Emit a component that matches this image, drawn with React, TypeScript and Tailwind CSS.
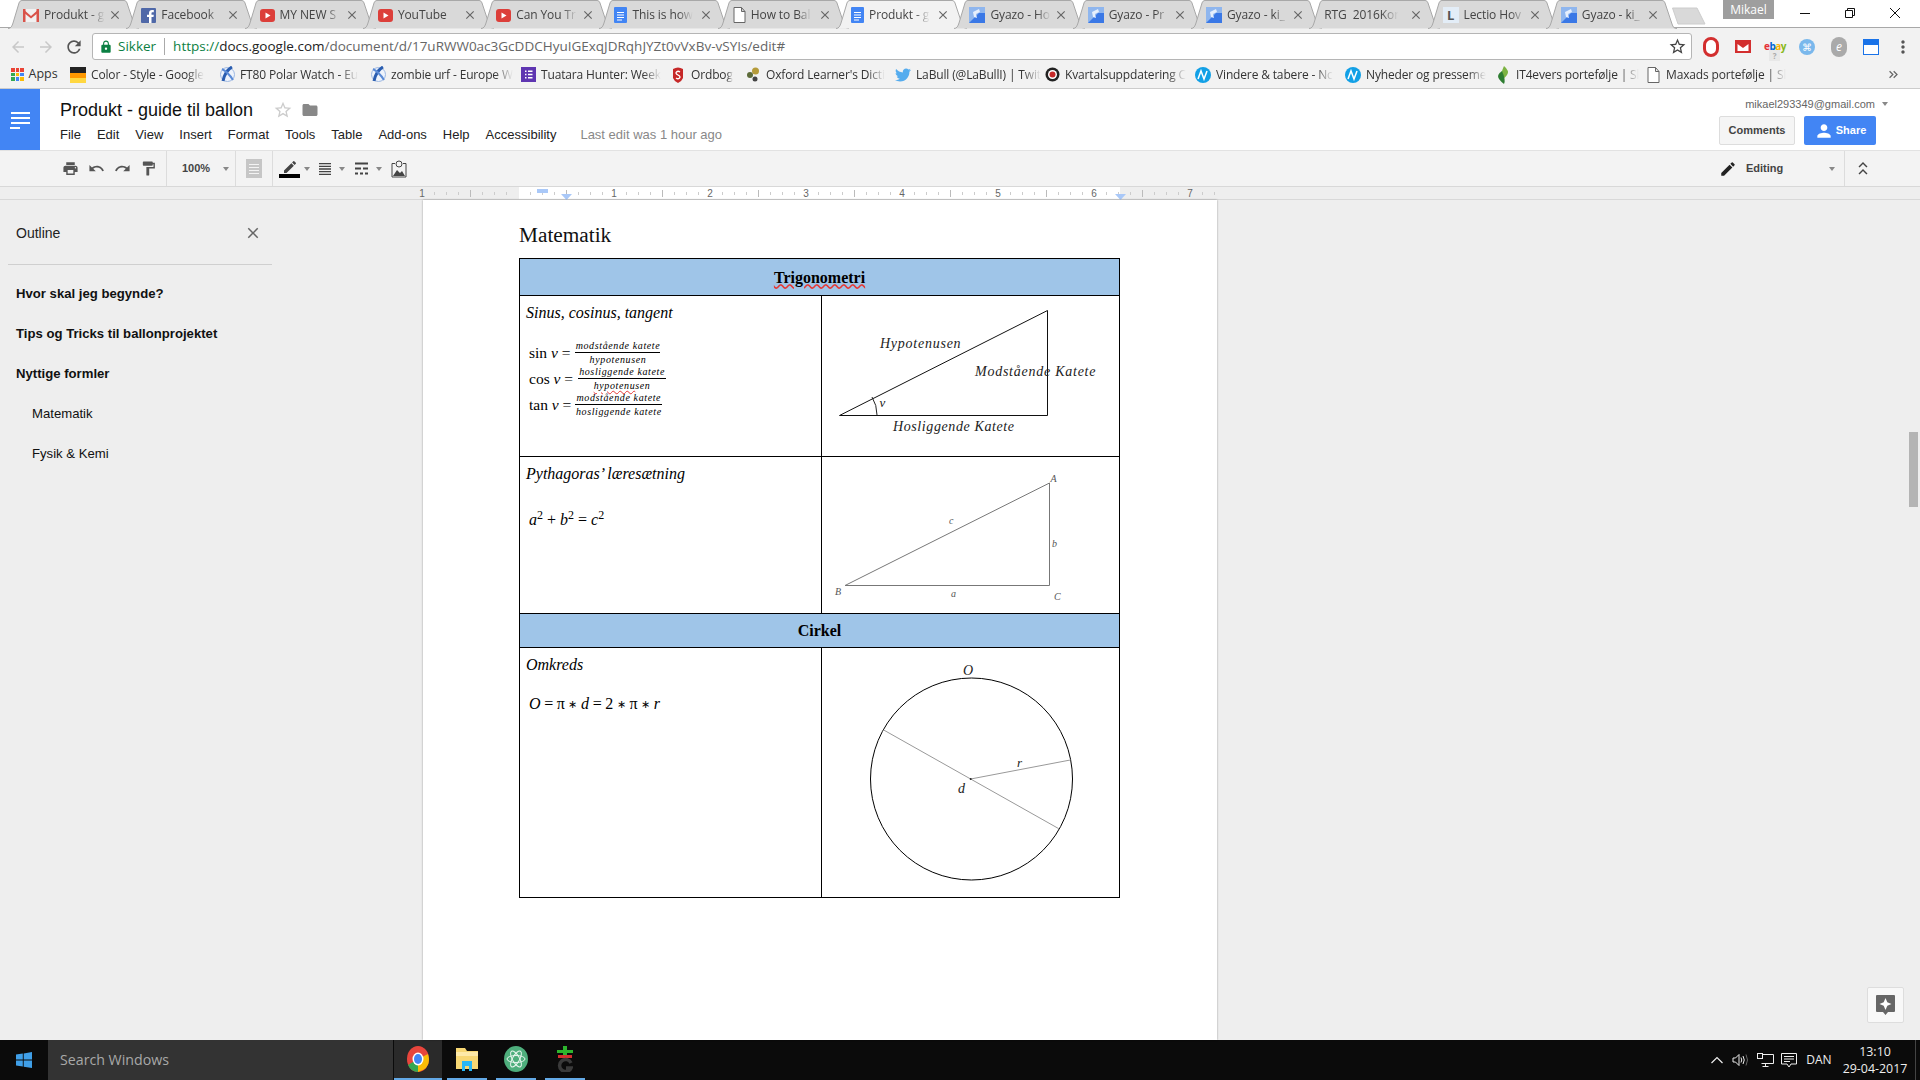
import { ReactNode } from 'react';
import {
  MdArrowBack,
  MdArrowForward,
  MdRefresh,
  MdLock,
  MdStarBorder,
  MdPrint,
  MdUndo,
  MdRedo,
  MdFormatPaint,
  MdEdit,
  MdFolder,
  MdClose,
  MdPerson,
  MdFormatAlignJustify,
  MdMoreVert,
  MdKeyboardArrowUp,
  MdKeyboardDoubleArrowRight,
} from 'react-icons/md';
import { FaTwitter } from 'react-icons/fa';

const GmailIcon = () => (
  <svg width="16" height="13" viewBox="0 0 16 13" className="shrink-0">
    <rect width="16" height="13" fill="#f1f1f1" />
    <path d="M0 0h2.5v13H0zM13.500 0H16v13h-2.500z" fill="#d9534a" />
    <path d="M0 0l8 7 8-7v3L8 9.500 0 3z" fill="#d9534a" />
  </svg>
);

const FacebookIcon = () => (
  <svg width="15" height="15" viewBox="0 0 15 15" className="shrink-0">
    <rect width="15" height="15" rx="1" fill="#4f68a8" />
    <path d="M10.500 15V9h2l.3-2.300h-2.300V5.300c0-.7.2-1.100 1.100-1.100h1.200V2.100c-.3 0-1-.1-1.800-.1-1.800 0-3 1-3 3v1.700h-2V9h2v6z" fill="#fff" />
  </svg>
);

const YoutubeIcon = () => (
  <svg width="15" height="13" viewBox="0 0 15 13" className="shrink-0">
    <rect width="15" height="13" rx="3" fill="#dc3f3a" />
    <path d="M5.500 3.500l5 3-5 3z" fill="#fff" />
  </svg>
);

const DocsIcon = () => (
  <svg width="13" height="16" viewBox="0 0 13 16" className="shrink-0">
    <rect width="13" height="16" rx="1" fill="#4285f4" />
    <path d="M3 5h7v1H3zM3 7.500h7v1H3zM3 10h7v1H3zM3 12.500h5v1H3z" fill="#fff" />
  </svg>
);

const BlankIcon = () => (
  <svg width="13" height="16" viewBox="0 0 13 16" className="shrink-0">
    <path d="M1 .5h7.500L12 4.500v11H1zM8.500 .5v4H12" fill="#fff" stroke="#666" />
  </svg>
);

const GyazoIcon = () => (
  <svg width="16" height="16" viewBox="0 0 16 16" className="shrink-0">
    <rect width="16" height="16" fill="#8fb6ee" />
    <path d="M0 16L10 6l6 0v10z" fill="#3a78e6" />
    <path d="M4 5l6-3 1 3-4 2 1 4-3-1z" fill="#e6effc" />
  </svg>
);

const LectioIcon = () => (
  <div className="w-[16px] h-[16px] shrink-0 bg-[#e3edf7] flex items-center justify-center text-[13px] font-bold text-[#555] leading-none">L</div>
);

const tabs: { title: string; icon?: ReactNode; active?: boolean }[] = [
  { title: 'Produkt - g', icon: <GmailIcon /> },
  { title: 'Facebook', icon: <FacebookIcon /> },
  { title: 'MY NEW S', icon: <YoutubeIcon /> },
  { title: 'YouTube', icon: <YoutubeIcon /> },
  { title: 'Can You Tr', icon: <YoutubeIcon /> },
  { title: 'This is how', icon: <DocsIcon /> },
  { title: 'How to Bal', icon: <BlankIcon /> },
  { title: 'Produkt - g', icon: <DocsIcon />, active: true },
  { title: 'Gyazo - Ho', icon: <GyazoIcon /> },
  { title: 'Gyazo - Pr', icon: <GyazoIcon /> },
  { title: 'Gyazo - ki_', icon: <GyazoIcon /> },
  { title: 'RTG  2016Komit' },
  { title: 'Lectio Hov', icon: <LectioIcon /> },
  { title: 'Gyazo - ki_', icon: <GyazoIcon /> },
];

const Tab = ({ title, icon, active }: { title: string; icon?: ReactNode; active?: boolean }) => (
  <div className="relative w-[118.3px] h-[28px] shrink-0 flex items-center pl-[15px] pt-[2px]">
    <svg width="132" height="29" viewBox="0 0 132 29" className="absolute left-0 top-0">
      <path
        d="M0 28.500C3 28.500 4 26 5 23L11 3C11.500 1.500 12.500 .5 14 .5H116C117.500 .5 118.500 1.500 119 3L126 24C127 27 128 28.500 131 28.500"
        fill={active ? '#f2f2f2' : '#d9d9d9'}
        stroke="#a8a8a8"
      />
    </svg>
    <div className="relative flex items-center gap-[5px]">
      {icon}
      <span className={`whitespace-pre text-[12px] text-[#444] tracking-[-0.1px] ${icon ? 'w-[62px]' : 'w-[76px]'} [mask-image:linear-gradient(to_right,black_75%,transparent_98%)]`}>
        {title}
      </span>
    </div>
    <MdClose className="absolute left-[100px] top-[8px] text-[#666]" size={14} />
  </div>
);

const bookmarks: { title: string; icon: ReactNode; w: string }[] = [
  {
    title: 'Color - Style - Google',
    w: 'w-[149px]',
    icon: (
      <div className="w-[16px] h-[16px] flex flex-col">
        <div className="h-[6px] bg-[#222]" />
        <div className="h-[5px] bg-[#ff9800]" />
        <div className="h-[5px] bg-[#ffd740]" />
      </div>
    ),
  },
  { title: 'FT80 Polar Watch - Eu', w: 'w-[151px]', icon: <PolarIcon /> },
  { title: 'zombie urf - Europe W', w: 'w-[150px]', icon: <PolarIcon /> },
  {
    title: 'Tuatara Hunter: Week',
    w: 'w-[150px]',
    icon: (
      <svg width="15" height="15" viewBox="0 0 15 15">
        <rect width="15" height="15" fill="#5e35b1" />
        <path d="M4 3.500h1.500V5H4zM7 3.500h4.500V5H7zM4 6.800h1.500v1.500H4zM7 6.800h4.500v1.500H7zM4 10h1.500v1.500H4zM7 10h4.500v1.500H7z" fill="#fff" />
      </svg>
    ),
  },
  {
    title: 'Ordbog',
    w: 'w-[75px]',
    icon: (
      <svg width="12" height="16" viewBox="0 0 12 16">
        <path d="M1 2q5-3 10 0v9q-1 3-5 5q-4-2-5-5z" fill="#c62828" />
        <path d="M8 5Q6 3.500 4.500 5T6 8t1.500 3T4 11" fill="none" stroke="#fff" strokeWidth="1.300" />
      </svg>
    ),
  },
  {
    title: "Oxford Learner's Dicti",
    w: 'w-[150px]',
    icon: (
      <svg width="15" height="15" viewBox="0 0 15 15">
        <circle cx="9.500" cy="4" r="3.500" fill="#b59b3a" />
        <circle cx="4" cy="8" r="3" fill="#5d6b3a" />
        <circle cx="9" cy="12" r="2.500" fill="#444" />
      </svg>
    ),
  },
  { title: 'LaBull (@LaBullI) | Twit', w: 'w-[149px]', icon: <FaTwitter className="text-[#55acee]" size={16} /> },
  {
    title: 'Kvartalsuppdatering C',
    w: 'w-[151px]',
    icon: (
      <svg width="15" height="15" viewBox="0 0 15 15">
        <circle cx="7.500" cy="7.500" r="7" fill="#222" />
        <circle cx="7.500" cy="7.500" r="4.500" fill="#fff" />
        <circle cx="7.500" cy="7.500" r="3" fill="#c62828" />
      </svg>
    ),
  },
  { title: 'Vindere & tabere - Nc', w: 'w-[150px]', icon: <NordnetIcon /> },
  { title: 'Nyheder og presseme', w: 'w-[150px]', icon: <NordnetIcon /> },
  {
    title: 'IT4evers portefølje | Sl',
    w: 'w-[150px]',
    icon: (
      <svg width="14" height="18" viewBox="0 0 14 18">
        <path d="M8 0Q14 5 11 9T6 13Q4 8 8 0z" fill="#7cb342" />
        <path d="M6 5Q0 9 3 13t5 5q2-4-2-13z" fill="#2e7d32" />
      </svg>
    ),
  },
  { title: 'Maxads portefølje | Sl', w: 'w-[150px]', icon: <BlankIcon /> },
];

function PolarIcon() {
  return (
    <svg width="15" height="17" viewBox="0 0 15 17">
      <circle cx="7.500" cy="8.500" r="7" fill="#eef3fb" stroke="#9db8e2" />
      <path d="M12 1Q5 5 3 15" fill="none" stroke="#2a5db0" strokeWidth="3" />
      <path d="M2 3q6 3 11 11" fill="none" stroke="#5b8bd6" strokeWidth="2" />
    </svg>
  );
}

function NordnetIcon() {
  return (
    <svg width="16" height="16" viewBox="0 0 16 16">
      <circle cx="8" cy="8" r="8" fill="#12a0e6" />
      <path d="M3 12L6 4l3 8 3-8" fill="none" stroke="#fff" strokeWidth="1.500" />
    </svg>
  );
}

const Caret = ({ className = '' }: { className?: string }) => (
  <div className={`w-0 h-0 border-l-[3px] border-r-[3px] border-t-[4px] border-l-transparent border-r-transparent border-t-[#888] ${className}`} />
);

const menu = ['File', 'Edit', 'View', 'Insert', 'Format', 'Tools', 'Table', 'Add-ons', 'Help', 'Accessibility'];

const Ruler = () => {
  const ticks: number[] = [];
  for (let x = 434; x < 1220; x += 12) ticks.push(x);
  const numbers = [
    { x: 422, n: 1 },
    { x: 614, n: 1 },
    { x: 710, n: 2 },
    { x: 806, n: 3 },
    { x: 902, n: 4 },
    { x: 998, n: 5 },
    { x: 1094, n: 6 },
    { x: 1190, n: 7 },
  ];
  return (
    <svg width="1920" height="14" viewBox="0 186 1920 14" className="block">
      <rect x="0" y="186" width="1920" height="14" fill="#eeeeee" />
      <rect x="519" y="187" width="601" height="12" fill="#ffffff" />
      <path d="M0 186.500H1920M0 199.500H1920" stroke="#d8d8d8" />
      {ticks.map((x) => {
        if ((x - 422) % 96 === 0) return null;
        const big = (x - 422) % 48 === 0;
        return <path key={x} d={`M${x + 0.5} ${big ? 190 : 192}V${big ? 197 : 195}`} stroke={big ? '#bbb' : '#ccc'} />;
      })}
      {numbers.map((item) => (
        <text key={item.x} x={item.x} y="197" textAnchor="middle" fontSize="10" fill="#666" fontFamily="Liberation Sans">
          {item.n}
        </text>
      ))}
      <rect x="537" y="189" width="11" height="4" fill="#a9c8f8" />
      <path d="M561 194h11l-5.500 6z" fill="#a9c8f8" />
      <path d="M1115 194h11l-5.500 6z" fill="#a9c8f8" />
    </svg>
  );
};

const Frac = ({ top, bottom, width, flagged }: { top: string; bottom: string; width: string; flagged?: boolean }) => (
  <div className={`flex flex-col items-center italic text-[10px] tracking-[0.62px] ${width}`}>
    <div className="w-full text-center leading-[12px] border-b border-black whitespace-nowrap">{top}</div>
    {flagged ? (
      <div className="leading-[13px] whitespace-nowrap">
        <span className="underline decoration-wavy decoration-[#e53935]">hypotenu</span>sen
      </div>
    ) : (
      <div className="leading-[13px] whitespace-nowrap">{bottom}</div>
    )}
  </div>
);

const FormulaRow = ({ fn, children, gap }: { fn: string; children: ReactNode; gap: string }) => (
  <div className={`h-[26px] flex items-center ${gap}`}>
    <span className="text-[15.5px] whitespace-pre">
      {fn} <i>v</i> =
    </span>
    {children}
  </div>
);

const TriangleOne = () => (
  <svg width="298" height="160" viewBox="822 296 298 160" className="block" fontFamily="Liberation Serif" fontStyle="italic" fill="#222">
    <path d="M839.500 415.500H1047.500V310.500z" fill="none" stroke="#111" />
    <path d="M872 397Q877 405 877 415" fill="none" stroke="#222" />
    <text x="879.500" y="407" fontSize="13">v</text>
    <text x="880" y="348" fontSize="14" letterSpacing="0.75">Hypotenusen</text>
    <text x="975" y="376" fontSize="14" letterSpacing="0.75">Modstående Katete</text>
    <text x="893" y="431" fontSize="14" letterSpacing="0.6">Hosliggende Katete</text>
  </svg>
);

const TriangleTwo = () => (
  <svg width="298" height="156" viewBox="822 457 298 156" className="block" fontFamily="Liberation Serif" fontStyle="italic" fontSize="10" fill="#555">
    <path d="M845 585.500H1049.500V483z" fill="none" stroke="#777" />
    <text x="1050.500" y="482">A</text>
    <text x="835" y="595">B</text>
    <text x="1054" y="600">C</text>
    <text x="949" y="524">c</text>
    <text x="1052" y="547">b</text>
    <text x="951" y="597">a</text>
  </svg>
);

const CircleFigure = () => (
  <svg width="298" height="249" viewBox="822 647 298 249" className="block" fontFamily="Liberation Serif" fontStyle="italic" fill="#222">
    <circle cx="971.500" cy="778" r="101" fill="none" stroke="#000" />
    <path d="M883.700 729L1058.800 827.700M970.700 778L1070.300 759" fill="none" stroke="#999" />
    <circle cx="970.700" cy="778" r="1" fill="#222" />
    <text x="963" y="674" fontSize="14">O</text>
    <text x="1017" y="766" fontSize="13">r</text>
    <text x="958" y="792" fontSize="14">d</text>
  </svg>
);

const Outline = () => (
  <aside className="w-[423px] shrink-0 pl-[8px] pt-[22px]">
    <div className="w-[264px] h-[43px] border-b border-[#cfcfcf] pl-[8px] pr-[10px] flex justify-between">
      <span className="text-[14px] leading-[22px] text-[#222]">Outline</span>
      <MdClose className="text-[#666] mt-[2px]" size={18} />
    </div>
    <div className="flex flex-col pt-[9px] text-[13.15px] text-[#111]">
      <div className="h-[40px] flex items-center pl-[8px] font-bold">Hvor skal jeg begynde?</div>
      <div className="h-[40px] flex items-center pl-[8px] font-bold">Tips og Tricks til ballonprojektet</div>
      <div className="h-[40px] flex items-center pl-[8px] font-bold">Nyttige formler</div>
      <div className="h-[40px] flex items-center pl-[24px]">Matematik</div>
      <div className="h-[40px] flex items-center pl-[24px]">Fysik &amp; Kemi</div>
    </div>
  </aside>
);

const Star = () => <span className="text-[11px] align-[1px]">∗</span>;

const MathTable = () => (
  <table className="w-[600px] table-fixed border-collapse font-['Liberation_Serif',serif] text-[16px] text-black">
    <colgroup>
      <col className="w-[302px]" />
      <col className="w-[298px]" />
    </colgroup>
    <tbody>
      <tr className="h-[37px]">
        <td colSpan={2} className="border border-black bg-[#9fc5e8] text-center font-bold p-0 pt-[1px]">
          <span className="underline decoration-wavy decoration-[#e53935]">Trigonometri</span>
        </td>
      </tr>
      <tr className="h-[161px]">
        <td className="border border-black align-top pl-[6px] pt-[8px] pb-0 pr-0">
          <div className="italic leading-[18px]">Sinus, cosinus, tangent</div>
          <div className="flex flex-col mt-[18px] pl-[3px]">
            <FormulaRow fn="sin" gap="gap-[5px]">
              <Frac top="modstående katete" bottom="hypotenusen" width="w-[85px]" />
            </FormulaRow>
            <FormulaRow fn="cos" gap="gap-[5px]">
              <Frac top="hosliggende katete" bottom="hypotenusen" width="w-[88px]" flagged />
            </FormulaRow>
            <FormulaRow fn="tan" gap="gap-[4px]">
              <Frac top="modstående katete" bottom="hosliggende katete" width="w-[87px]" />
            </FormulaRow>
          </div>
        </td>
        <td className="border border-black p-0 align-top">
          <TriangleOne />
        </td>
      </tr>
      <tr className="h-[157px]">
        <td className="border border-black align-top pl-[6px] pt-[8px] pb-0 pr-0">
          <div className="italic leading-[18px]">Pythagoras’ læresætning</div>
          <div className="italic mt-[27px] pl-[3px] leading-[20px]">
            a<sup className="not-italic text-[12px]">2</sup> <span className="not-italic">+</span> b<sup className="not-italic text-[12px]">2</sup> <span className="not-italic">=</span> c<sup className="not-italic text-[12px]">2</sup>
          </div>
        </td>
        <td className="border border-black p-0 align-top">
          <TriangleTwo />
        </td>
      </tr>
      <tr className="h-[34px]">
        <td colSpan={2} className="border border-black bg-[#9fc5e8] text-center font-bold p-0">
          Cirkel
        </td>
      </tr>
      <tr className="h-[250px]">
        <td className="border border-black align-top pl-[6px] pt-[8px] pb-0 pr-0">
          <div className="italic leading-[18px]">Omkreds</div>
          <div className="mt-[20px] pl-[3px] leading-[20px] whitespace-pre tracking-[-0.2px]">
            <i>O</i> = π <Star /> <i>d</i> = 2 <Star /> π <Star /> <i>r</i>
          </div>
        </td>
        <td className="border border-black p-0 align-top">
          <CircleFigure />
        </td>
      </tr>
    </tbody>
  </table>
);

const TaskTile = ({ children, className = '' }: { children: ReactNode; className?: string }) => (
  <div className={`h-full border-b-[2px] border-[#63a9e6] flex items-center justify-center ${className}`}>{children}</div>
);

export default function App() {
  return (
    <div className="w-[1920px] h-[1080px] flex flex-col overflow-hidden bg-white font-['Liberation_Sans',Arial,sans-serif]">
      {/* browser chrome */}
      <div className="font-['Open_Sans',sans-serif] text-[#333]">
        <div className="relative h-[28px] flex pl-[8px] bg-white border-b border-[#a8a8a8]">
          {tabs.map((tab, i) => (
            <Tab key={i} title={tab.title} icon={tab.icon} active={tab.active} />
          ))}
          <svg width="34" height="18" viewBox="0 0 34 18" className="ml-[8px] mt-[7px]">
            <path d="M.5 1H25L33 17H6z" fill="#d9d9d9" stroke="#ccc" />
          </svg>
          <div className="absolute left-[1723px] top-0 w-[51px] h-[19px] bg-[#9e9e9e] flex items-center justify-center text-[12px] text-white">Mikael</div>
          <svg width="12" height="12" viewBox="0 0 12 12" className="absolute left-[1799px] top-[7px]">
            <path d="M1 6.500h10" stroke="#111" />
          </svg>
          <svg width="12" height="12" viewBox="0 0 12 12" className="absolute left-[1844px] top-[7px]">
            <path d="M1.500 3.500h7v7h-7zM3.500 3.500v-2h7v7h-2" fill="none" stroke="#111" />
          </svg>
          <svg width="12" height="12" viewBox="0 0 12 12" className="absolute left-[1889px] top-[7px]">
            <path d="M1 1l10 10M11 1L1 11" stroke="#111" />
          </svg>
        </div>

        <div className="h-[33px] pt-[4px] bg-[#f2f2f2] flex items-center">
          <MdArrowBack className="ml-[9px] text-[#c8c8c8]" size={18} />
          <MdArrowForward className="ml-[10px] text-[#c8c8c8]" size={18} />
          <MdRefresh className="ml-[9px] text-[#555]" size={20} />
          <div className="ml-[8px] w-[1600px] h-[27px] bg-white border border-[#b5b5b5] rounded-[3px] flex items-center pl-[6px] pr-[4px]">
            <MdLock className="text-[#0b8043]" size={14} />
            <span className="ml-[5px] text-[13.5px] text-[#0b8043]">Sikker</span>
            <div className="ml-[8px] w-px h-[17px] bg-[#aaa]" />
            <span className="ml-[8px] text-[13.5px] text-[#666] whitespace-nowrap">
              <span className="text-[#0b8043]">https://</span>
              <span className="text-[#222]">docs.google.com</span>/document/d/17uRWW0ac3GcDDCHyuIGExqJDRqhJYZt0vVxBv-vSYIs/edit#
            </span>
            <MdStarBorder className="ml-auto text-[#444]" size={19} />
          </div>
          <div className="ml-[3px] flex items-center">
            <div className="w-[32px] flex justify-center">
              <div className="w-[16px] h-[20px] rounded-full border-[3px] border-[#d32f2f] bg-white" />
            </div>
            <div className="w-[32px] flex justify-center">
              <svg width="16" height="13" viewBox="0 0 16 13">
                <path d="M0 0h16v13H0z" fill="#d32f2f" />
                <path d="M2.500 4l5.500 4 5.500-4v7h-11z" fill="#fff" />
              </svg>
            </div>
            <div className="relative w-[32px] h-[20px] flex justify-center items-center text-[10px] font-bold tracking-[-0.5px]">
              <span className="text-[#e53238]">e</span>
              <span className="text-[#0064d2]">b</span>
              <span className="text-[#f5af02]">a</span>
              <span className="text-[#86b817]">y</span>
              <div className="absolute left-[10px] top-[13px] w-[11px] h-[11px] bg-[#e8e8e8] text-[8px] text-[#aaa] text-center leading-[11px]">?</div>
            </div>
            <div className="w-[32px] flex justify-center">
              <div className="w-[16px] h-[16px] rounded-full bg-[#7ab8ec] text-white text-[10px] leading-[16px] text-center">⌘</div>
            </div>
            <div className="w-[32px] flex justify-center">
              <div className="w-[16px] h-[20px] rounded-full bg-[#aaa] text-white text-[12px] italic leading-[20px] text-center">e</div>
            </div>
            <div className="w-[32px] flex justify-center">
              <div className="w-[16px] h-[16px] bg-[#1a73e8] flex items-end justify-center">
                <div className="w-[14px] h-[9px] mb-[1px] bg-white" />
              </div>
            </div>
            <MdMoreVert className="ml-[6px] text-[#555]" size={20} />
          </div>
        </div>

        <div className="h-[28px] bg-[#f2f2f2] border-b border-[#ccc] flex items-center">
          <div className="w-[70px] shrink-0 flex items-center pl-[11px] gap-[5px]">
            <div className="grid grid-cols-3 gap-[1px]">
              {['#ea4335', '#ea4335', '#ea4335', '#34a853', '#fbbc05', '#4285f4', '#34a853', '#4285f4', '#fbbc05'].map((c, i) => (
                <div key={i} className="w-[3.500px] h-[3.500px]" style={{ backgroundColor: c }} />
              ))}
            </div>
            <span className="text-[12.5px]">Apps</span>
          </div>
          {bookmarks.map((b) => (
            <div key={b.title} className={`${b.w} shrink-0 flex items-center gap-[5px]`}>
              <div className="w-[16px] flex justify-center shrink-0">{b.icon}</div>
              <span className="whitespace-nowrap text-[12px] tracking-[-0.15px] [mask-image:linear-gradient(to_right,black_85%,transparent)]">
                {b.title}
              </span>
            </div>
          ))}
          <MdKeyboardDoubleArrowRight className="ml-auto mr-[19px] text-[#666]" size={15} />
        </div>
      </div>

      {/* docs header */}
      <header className="h-[61px] flex">
        <div className="w-[40px] bg-[#4285f4] flex flex-col justify-center items-center gap-[3px] pt-[2px]">
          <div className="w-[19px] h-[2px] bg-white" />
          <div className="w-[19px] h-[2px] bg-white" />
          <div className="w-[19px] h-[2px] bg-white" />
          <div className="w-[10px] h-[2px] bg-white self-start ml-[10px]" />
        </div>
        <div className="pl-[20px]">
          <div className="flex items-center h-[40px] pt-[2px]">
            <span className="text-[18px] text-[#111]">Produkt - guide til ballon</span>
            <MdStarBorder className="ml-[20px] text-[#ccc]" size={20} />
            <MdFolder className="ml-[8px] text-[#888]" size={18} />
          </div>
          <nav className="flex items-center gap-[16px] text-[13px] text-[#222] mt-[-4px]">
            {menu.map((item) => (
              <span key={item}>{item}</span>
            ))}
            <span className="ml-[8px] text-[#888] text-[13px]">Last edit was 1 hour ago</span>
          </nav>
        </div>
        <div className="ml-auto flex flex-col items-end pr-[44px] pt-[8px]">
          <div className="flex items-center gap-[7px] mr-[-12px] text-[11px] text-[#666] h-[14px]">
            mikael293349@gmail.com
            <Caret />
          </div>
          <div className="flex gap-[9px] mt-[5px]">
            <div className="w-[76px] h-[29px] border border-[#ddd] rounded-[2px] bg-[#f5f5f5] flex items-center justify-center text-[11px] font-bold text-[#444]">
              Comments
            </div>
            <div className="w-[72px] h-[29px] rounded-[2px] bg-[#4285f4] flex items-center justify-center gap-[2px] text-[11px] font-bold text-white">
              <MdPerson size={20} />
              Share
            </div>
          </div>
        </div>
      </header>

      {/* docs toolbar */}
      <div className="h-[36px] bg-[#f3f3f3] border-t border-[#e2e2e2] flex items-center text-[#555]">
        <div className="ml-[57px] w-[26px] flex justify-center"><MdPrint size={17} /></div>
        <div className="w-[26px] flex justify-center"><MdUndo size={17} /></div>
        <div className="w-[26px] flex justify-center"><MdRedo size={17} /></div>
        <div className="w-[26px] flex justify-center"><MdFormatPaint size={17} /></div>
        <div className="ml-[5px] w-[70px] h-full border-x border-[#dcdcdc] flex items-center pl-[15px] gap-[13px] text-[11px] font-bold text-[#444]">
          100%
          <Caret />
        </div>
        <div className="w-[36px] h-full flex items-center justify-center">
          <div className="w-[16px] h-[19px] bg-[#c6c6c6] flex flex-col items-center justify-center gap-[2px]">
            <div className="w-[10px] h-px bg-[#f3f3f3]" />
            <div className="w-[10px] h-px bg-[#f3f3f3]" />
            <div className="w-[10px] h-px bg-[#f3f3f3]" />
            <div className="w-[10px] h-px bg-[#f3f3f3]" />
          </div>
        </div>
        <div className="h-full border-l border-[#dcdcdc] pl-[6px] flex items-center gap-[4px]">
          <div className="w-[21px] flex flex-col items-center text-[#444]">
            <MdEdit size={16} className="mb-[-1px]" />
            <div className="w-[21px] h-[4px] bg-black" />
          </div>
          <Caret />
          <MdFormatAlignJustify className="ml-[3px] text-[#444]" size={16} />
          <Caret className="ml-[2px]" />
          <svg width="16" height="14" viewBox="0 0 16 14" className="ml-[5px]">
            <path d="M1 1.500h13M1 6.500h6M9 6.500h5M1 11.500h3M6 11.500h3M11 11.500h3" stroke="#444" strokeWidth="2" />
          </svg>
          <Caret className="ml-[2px]" />
          <svg width="16" height="18" viewBox="0 0 16 18" className="ml-[5px]">
            <path d="M1 3.500h3M12 3.500h3V17H1V3.500" fill="none" stroke="#444" />
            <path d="M2 16l4-6 3 3 2-2 3 5z" fill="#444" />
            <circle cx="8" cy="4" r="3" fill="none" stroke="#444" />
          </svg>
        </div>
        <div className="ml-auto flex items-center h-full">
          <MdEdit className="text-[#222]" size={18} />
          <span className="ml-[9px] w-[83px] text-[11px] font-bold text-[#444]">Editing</span>
          <Caret />
          <div className="ml-[9px] h-full w-[76px] border-l border-[#dcdcdc] pl-[9px] flex flex-col justify-center">
            <MdKeyboardArrowUp className="text-[#444] mb-[-11px]" size={18} />
            <MdKeyboardArrowUp className="text-[#444]" size={18} />
          </div>
        </div>
      </div>

      <Ruler />

      {/* document area */}
      <main className="relative flex-1 min-h-0 flex bg-[#eeeeee]">
        <Outline />
        <div className="w-[794px] bg-white shadow-[0_0_2px_rgba(0,0,0,0.35)] pl-[96px] pt-[23px]">
          <h2 className="font-['Liberation_Serif',serif] text-[21.3px] leading-[24px] h-[35px] text-[#111]">Matematik</h2>
          <MathTable />
        </div>
        <div className="absolute left-[1909px] top-[232px] w-[9px] h-[75px] bg-[#b4b4b4]" />
        <div className="absolute left-[1867px] top-[787px] w-[37px] h-[36px] bg-[#f8f8f8] border border-[#ddd] rounded-[2px] flex items-center justify-center">
          <svg width="19" height="20" viewBox="0 0 19 20">
            <path d="M1 0h17a1 1 0 0 1 1 1v15a1 1 0 0 1-1 1h-6l-2.500 3L7 17H1a1 1 0 0 1-1-1V1a1 1 0 0 1 1-1z" fill="#666" />
            <path d="M9.500 3l1.800 4.200 4.200 1.800-4.200 1.800-1.800 4.200-1.800-4.200L3.500 9l4.200-1.800z" fill="#fff" />
          </svg>
        </div>
      </main>

      {/* windows taskbar */}
      <footer className="h-[40px] shrink-0 bg-[#0b0b0b] flex text-[#eee] font-['Open_Sans',sans-serif]">
        <div className="w-[48px] flex items-center justify-center">
          <svg width="16" height="16" viewBox="0 0 16 16">
            <path d="M0 2.500L6.800 1.500V7.500H0zM7.700 1.400L16 0V7.500H7.700zM0 8.500H6.800V14.500L0 13.500zM7.700 8.500H16V16L7.700 14.700z" fill="#3f9fe8" />
          </svg>
        </div>
        <div className="w-[345px] bg-[#333333] flex items-center pl-[12px] text-[14.2px] text-[#a8a8a8]">Search Windows</div>
        <div className="ml-[1px] flex">
          <TaskTile className="w-[48px] bg-[#2a2a2a]">
            <svg width="22" height="26" viewBox="0 0 22 26">
              <ellipse cx="11" cy="13" rx="11" ry="13" fill="#e8453c" />
              <path d="M11 13L1 19Q4 26 11 26z" fill="#34a853" />
              <path d="M11 13L21 8Q22 12 22 14 22 23 11 26z" fill="#fbbc05" />
              <ellipse cx="11" cy="13" rx="5.500" ry="6.500" fill="#fff" />
              <ellipse cx="11" cy="13" rx="4" ry="5" fill="#4285f4" />
            </svg>
          </TaskTile>
          <TaskTile className="w-[40px] ml-[5px]">
            <svg width="22" height="24" viewBox="0 0 22 24">
              <path d="M0 1h9l2 3h11v18H0z" fill="#f7d774" />
              <path d="M0 5h22v4H0z" fill="#fde9a8" />
              <path d="M6 14h10v10h-3v-5H9v5H6z" fill="#29b6f6" />
            </svg>
          </TaskTile>
          <TaskTile className="w-[40px] ml-[9px]">
            <svg width="24" height="26" viewBox="0 0 24 26">
              <ellipse cx="12" cy="13" rx="12" ry="13" fill="#4eae7c" />
              <g fill="none" stroke="#e8f5ee" strokeWidth="1">
                <ellipse cx="12" cy="13" rx="3.500" ry="9" transform="rotate(30 12 13)" />
                <ellipse cx="12" cy="13" rx="3.500" ry="9" transform="rotate(-30 12 13)" />
                <ellipse cx="12" cy="13" rx="3.500" ry="9" transform="rotate(90 12 13)" />
              </g>
            </svg>
          </TaskTile>
          <TaskTile className="w-[40px] ml-[9px]">
            <svg width="16" height="26" viewBox="0 0 16 26">
              <path d="M6 0h4v4h6v3h-6v3H6V7H0V4h6z" fill="#2db52d" />
              <rect x="1" y="9" width="14" height="3" fill="#d32f2f" />
              <path d="M14 17a6 6 0 1 0 0 5h-5" fill="none" stroke="#3a3a3a" strokeWidth="3.500" />
            </svg>
          </TaskTile>
        </div>
        <div className="ml-auto flex items-center">
          <svg width="12" height="8" viewBox="0 0 12 8" className="mr-[9px]">
            <path d="M.5 7L6 1.500 11.500 7" fill="none" stroke="#eee" strokeWidth="1.200" />
          </svg>
          <svg width="17" height="14" viewBox="0 0 17 14" className="mr-[8px]">
            <path d="M1 5h2.500L7 1.500v11L3.500 9H1z" fill="none" stroke="#eee" />
            <path d="M9 4.500q1.500 2.500 0 5M11 3q2.500 4 0 8" fill="none" stroke="#eee" />
            <path d="M14 1.500q3 5.500 0 11" fill="none" stroke="#666" />
          </svg>
          <svg width="17" height="14" viewBox="0 0 17 14" className="mr-[7px]">
            <path d="M4.500 1.500h12v9h-12M8.500 10.500v3M5.500 13.500h6" fill="none" stroke="#eee" />
            <rect x=".5" y=".5" width="5" height="5" fill="#0b0b0b" stroke="#eee" />
          </svg>
          <svg width="16" height="15" viewBox="0 0 16 15" className="mr-[9px]">
            <path d="M.5.5h15v10.500H10L8 14l-2-3H.5z" fill="none" stroke="#eee" />
            <path d="M3 3.500h10M3 6h10M3 8.500h6" stroke="#eee" />
          </svg>
          <span className="text-[12px] w-[26px] text-center">DAN</span>
          <div className="ml-[12px] flex flex-col items-center text-[12.4px] leading-[17px] w-[62px]">
            <span>13:10</span>
            <span className="whitespace-nowrap">29-04-2017</span>
          </div>
          <div className="ml-[9px] w-px h-full bg-[#444]" />
          <div className="w-[4px]" />
        </div>
      </footer>
    </div>
  );
}
